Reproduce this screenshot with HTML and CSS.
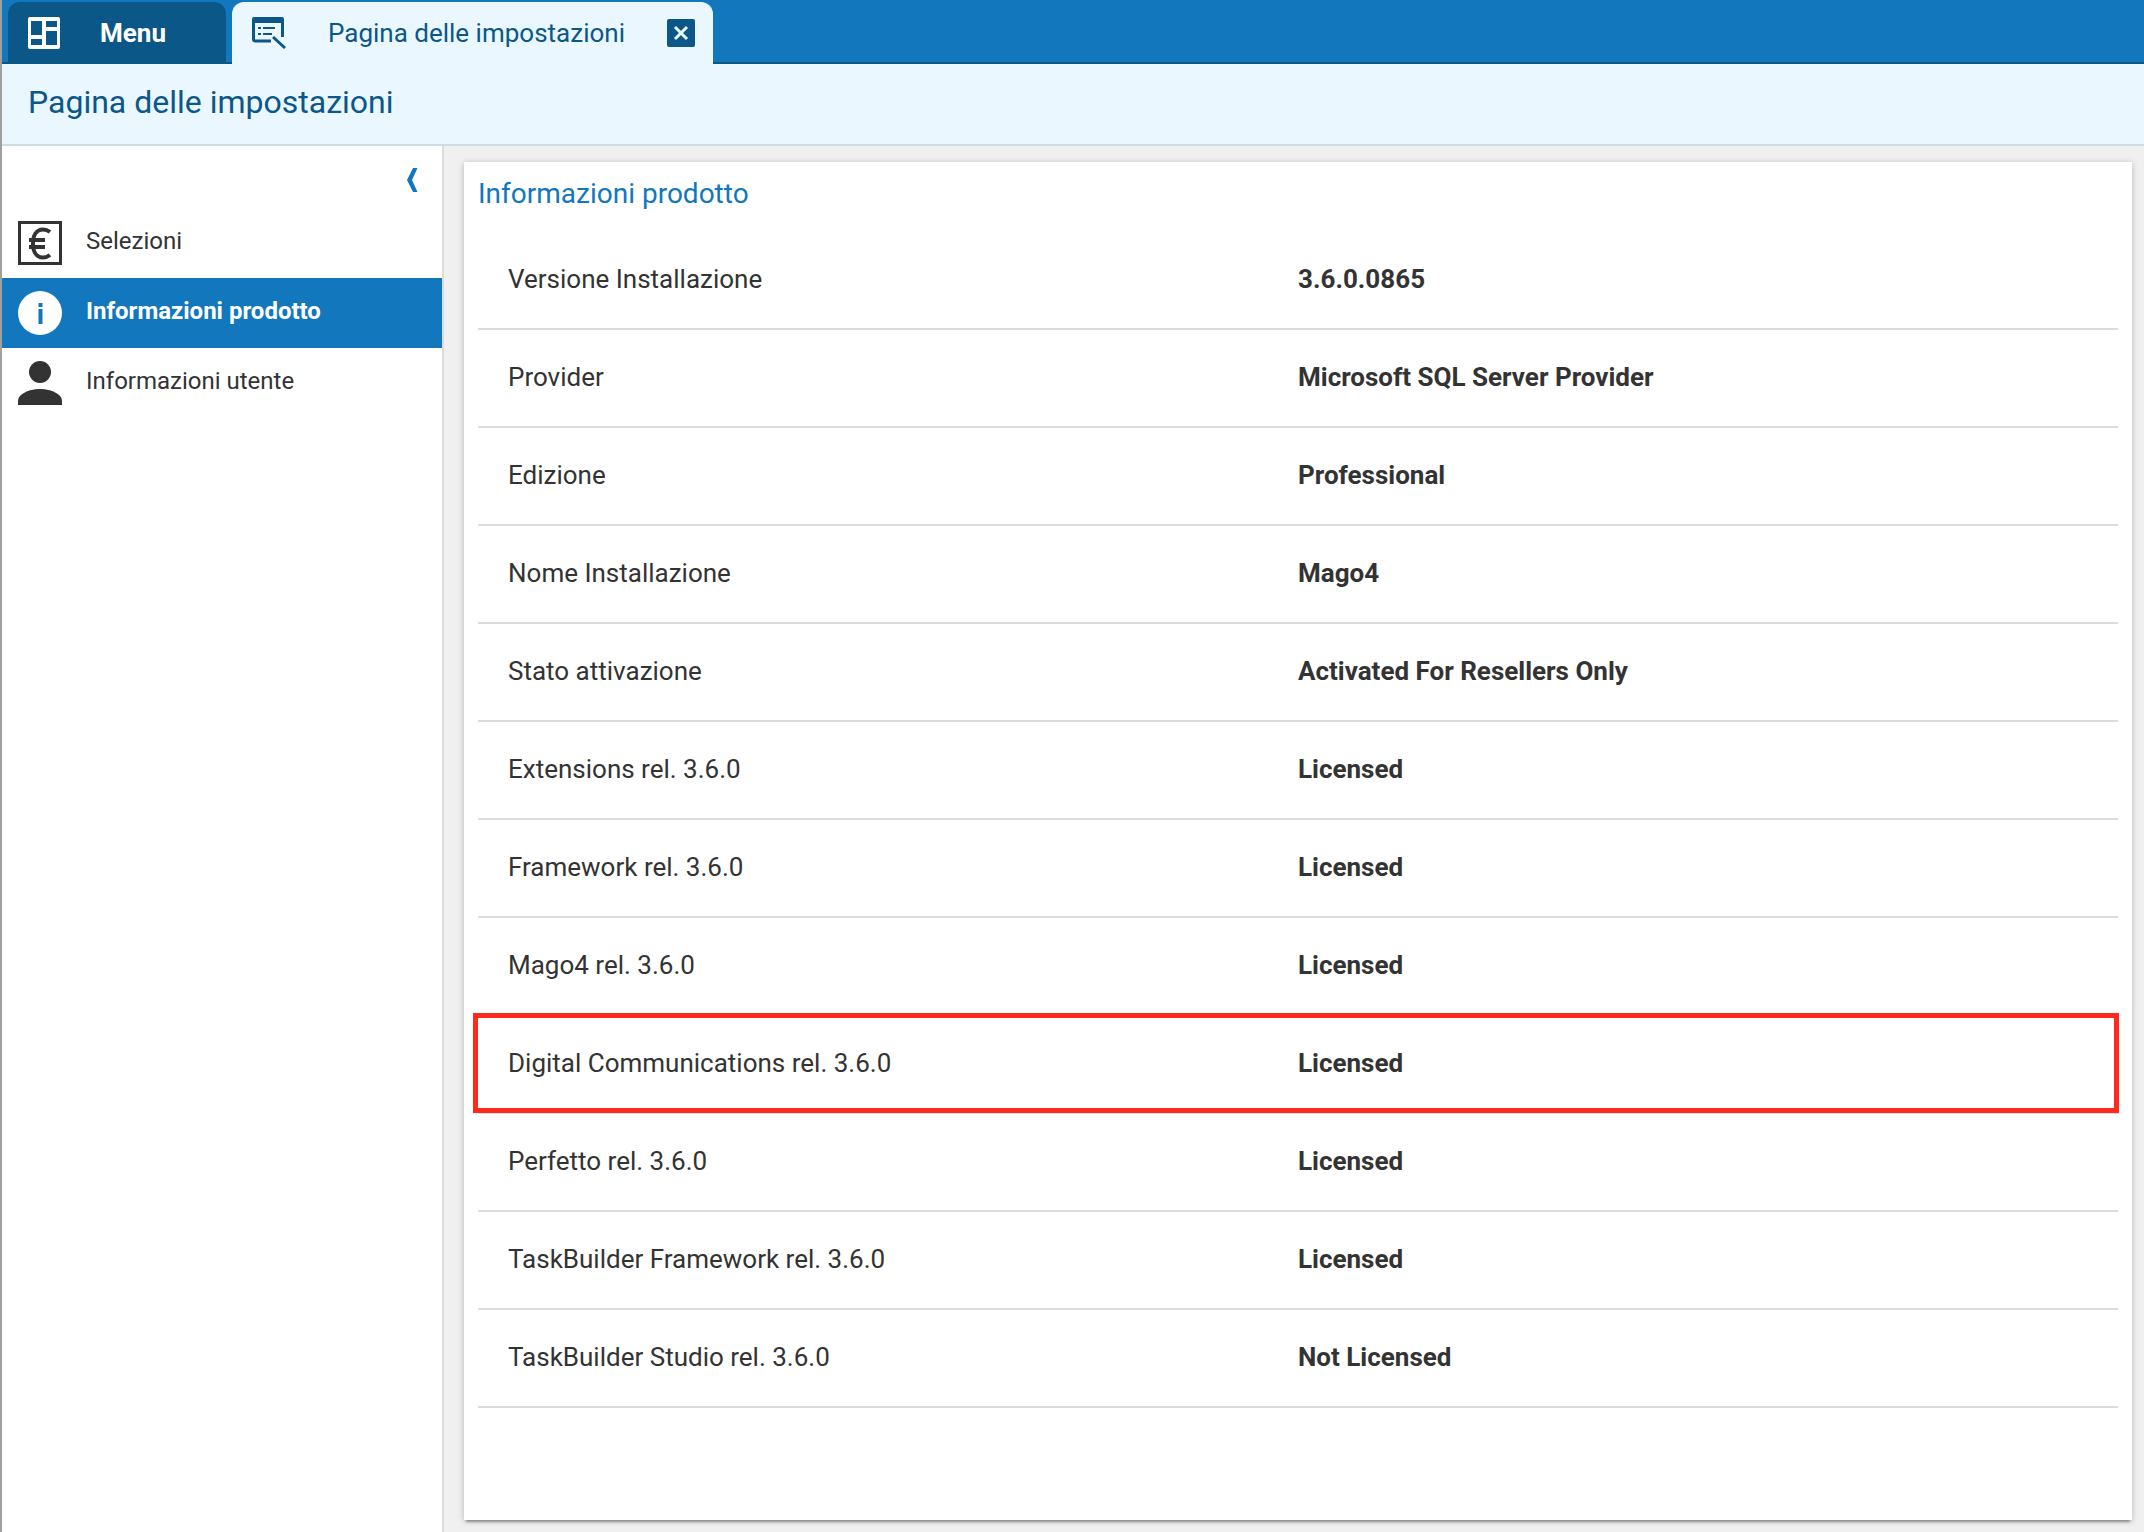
FILE: index.html
```
<!DOCTYPE html>
<html lang="it">

<head>
    <meta charset="UTF-8">
    <meta name="viewport" content="width=device-width, initial-scale=1.0">
    <title>Pagina delle impostazioni</title>
    <link rel="stylesheet" href="styles.css">
</head>

<body>
    <header class="topbar">
        <button type="button" class="tab tab-menu">
            <svg class="tab-icon" viewBox="0 0 36 36" aria-hidden="true">
                <path fill="#fff" fill-rule="evenodd" d="M4 2h28a2 2 0 0 1 2 2v28a2 2 0 0 1-2 2H4a2 2 0 0 1-2-2V4a2 2 0 0 1 2-2zM5 6v14h11V6zM20 6v6h11V6zM5 24v6h11v-6zM20 16v14h11V16z"/>
            </svg>
            <span>Menu</span>
        </button>
        <div class="tab tab-active">
            <svg class="tab-icon" viewBox="0 0 36 36" aria-hidden="true">
                <g fill="none" stroke="#0b5788" stroke-width="3">
                    <path d="M21 26H5.5a2 2 0 0 1-2-2V5M32.500 5v17"/>
                    <path d="M23 22l12 11"/>
                    <path d="M8 13h3M13 13h12M8 19h3M13 19h9" stroke-width="2"/>
                </g>
                <path fill="#0b5788" d="M4 2h28a2 2 0 0 1 2 2v4H2V4a2 2 0 0 1 2-2z"/>
            </svg>
            <span>Pagina delle impostazioni</span>
            <button type="button" class="close" aria-label="Chiudi">
                <svg viewBox="0 0 28 28" aria-hidden="true">
                    <path d="M8 8l12 12M20 8L8 20" stroke="#eaf7ff" stroke-width="3"/>
                </svg>
            </button>
        </div>
    </header>

    <div class="page-title">
        <h1>Pagina delle impostazioni</h1>
    </div>

    <div class="layout">
        <nav class="sidebar">
            <button type="button" class="collapse" aria-label="Comprimi">
                <svg viewBox="0 0 12 24" aria-hidden="true">
                    <path d="M7 0h4.5L6 12l5.500 12H7L1 12z" fill="#1277bc"/>
                </svg>
            </button>
            <a href="#" class="nav-item">
                <svg class="nav-icon" viewBox="0 0 44 44" aria-hidden="true">
                    <rect x="1.5" y="1.5" width="41" height="41" fill="none" stroke="#333" stroke-width="3"/>
                    <path d="M32 11C29.500 9 27.500 8.500 25 8.500C18.500 8.500 15 14 15 22.500S18.500 36.500 25 36.500c2.500 0 4.500-.5 7-2.500M11 19h16M11 26h16" fill="none" stroke="#333" stroke-width="4"/>
                </svg>
                <span>Selezioni</span>
            </a>
            <a href="#" class="nav-item nav-selected">
                <svg class="nav-icon" viewBox="0 0 44 44" aria-hidden="true">
                    <circle cx="22" cy="22" r="22" fill="#fff"/>
                    <path d="M20.500 12h4v4h-4zM20.500 18h4v15h-4z" fill="#1277bc"/>
                </svg>
                <span>Informazioni prodotto</span>
            </a>
            <a href="#" class="nav-item">
                <svg class="nav-icon" viewBox="0 0 44 44" aria-hidden="true">
                    <circle cx="22" cy="11" r="11" fill="#333"/>
                    <path d="M0 44v-4c0-7 11-12 22-12s22 5 22 12v4z" fill="#333"/>
                </svg>
                <span>Informazioni utente</span>
            </a>
        </nav>

        <main class="content">
            <section class="card">
                <h2>Informazioni prodotto</h2>
                <table class="info">
                    <tr><th scope="row">Versione Installazione</th><td>3.6.0.0865</td></tr>
                    <tr><th scope="row">Provider</th><td>Microsoft SQL Server Provider</td></tr>
                    <tr><th scope="row">Edizione</th><td>Professional</td></tr>
                    <tr><th scope="row">Nome Installazione</th><td>Mago4</td></tr>
                    <tr><th scope="row">Stato attivazione</th><td>Activated For Resellers Only</td></tr>
                    <tr><th scope="row">Extensions rel. 3.6.0</th><td>Licensed</td></tr>
                    <tr><th scope="row">Framework rel. 3.6.0</th><td>Licensed</td></tr>
                    <tr><th scope="row">Mago4 rel. 3.6.0</th><td>Licensed</td></tr>
                    <tr class="highlight"><th scope="row">Digital Communications rel. 3.6.0</th><td>Licensed</td></tr>
                    <tr><th scope="row">Perfetto rel. 3.6.0</th><td>Licensed</td></tr>
                    <tr><th scope="row">TaskBuilder Framework rel. 3.6.0</th><td>Licensed</td></tr>
                    <tr><th scope="row">TaskBuilder Studio rel. 3.6.0</th><td>Not Licensed</td></tr>
                </table>
            </section>
        </main>
    </div>
</body>

</html>
```

FILE: styles.css
```
* {
    box-sizing: border-box;
}

body {
    margin: 0;
    min-height: 100vh;
    display: flex;
    flex-direction: column;
    border-left: 2px solid #a0a0a0;
    font-family: Roboto, "Liberation Sans", sans-serif;
    font-size: 26px;
    color: #333333;
    background-color: #f0f0f0;
}

button {
    border: none;
    padding: 0;
    background: none;
    font: inherit;
    cursor: pointer;
}

svg {
    display: block;
}

/* top bar */
.topbar {
    display: flex;
    gap: 6px;
    height: 64px;
    padding: 2px 6px 0;
    background-color: #1277bc;
    box-shadow: inset 0 -2px #0b5788;
}

.tab {
    display: flex;
    align-items: center;
    height: 62px;
    padding: 0 18px;
    border-radius: 12px 12px 0 0;
}

.tab-icon {
    width: 36px;
    height: 36px;
}

.tab-menu {
    width: 218px;
    gap: 38px;
    background-color: #0b5788;
    color: #ffffff;
    font-weight: 700;
}

.tab-active {
    gap: 42px;
    background-color: #eaf7ff;
    color: #0b5788;
}

.close {
    width: 28px;
    height: 28px;
    border-radius: 2px;
    background-color: #0b5788;
}

/* page title */
.page-title {
    display: flex;
    align-items: center;
    height: 82px;
    padding: 0 26px 4px;
    background-color: #eaf7ff;
    border-bottom: 2px solid #cddde8;
}

h1 {
    margin: 0;
    font-size: 32px;
    font-weight: 400;
    color: #0b5788;
}

.layout {
    flex: 1;
    display: flex;
}

/* sidebar */
.sidebar {
    flex: none;
    width: 442px;
    background-color: #ffffff;
    border-right: 2px solid #dcdcdc;
}

.collapse {
    display: flex;
    align-items: center;
    justify-content: flex-end;
    width: 100%;
    height: 62px;
    padding: 6px 24px 0;
}

.collapse svg {
    width: 12px;
    height: 24px;
}

.nav-item {
    display: flex;
    align-items: center;
    gap: 24px;
    height: 70px;
    padding: 0 16px;
    font-size: 24px;
    color: inherit;
    text-decoration: none;
}

.nav-item span {
    padding-bottom: 4px;
}

.nav-icon {
    width: 44px;
    height: 44px;
}

.nav-selected {
    background-color: #1277bc;
    color: #ffffff;
    font-weight: 700;
}

/* content */
.content {
    flex: 1;
    display: flex;
    padding: 16px 12px 12px 20px;
}

.card {
    flex: 1;
    padding: 14px;
    background-color: #ffffff;
    box-shadow: 0 4px 2px -2px rgba(0, 0, 0, 0.3), 0 1px 6px rgba(0, 0, 0, 0.25);
}

h2 {
    margin: 0;
    height: 56px;
    line-height: 36px;
    font-size: 28px;
    font-weight: 400;
    color: #1277bc;
}

.info {
    width: 100%;
    border-collapse: separate;
    border-spacing: 0;
    table-layout: fixed;
}

.info th,
.info td {
    height: 98px;
    padding: 0 0 2px;
    border-bottom: 2px solid #dcdcdc;
    text-align: left;
    font-weight: 400;
}

.info th {
    width: 50%;
    padding-left: 30px;
}

.info td {
    font-weight: 700;
}

/* red frame over the whole row, both cells are equally wide */
.highlight th {
    position: relative;
}

.highlight th::before {
    content: "";
    position: absolute;
    inset: -3px calc(-100% - 1px) -1px -5px;
    border: 5px solid #ff2a1c;
}
```
